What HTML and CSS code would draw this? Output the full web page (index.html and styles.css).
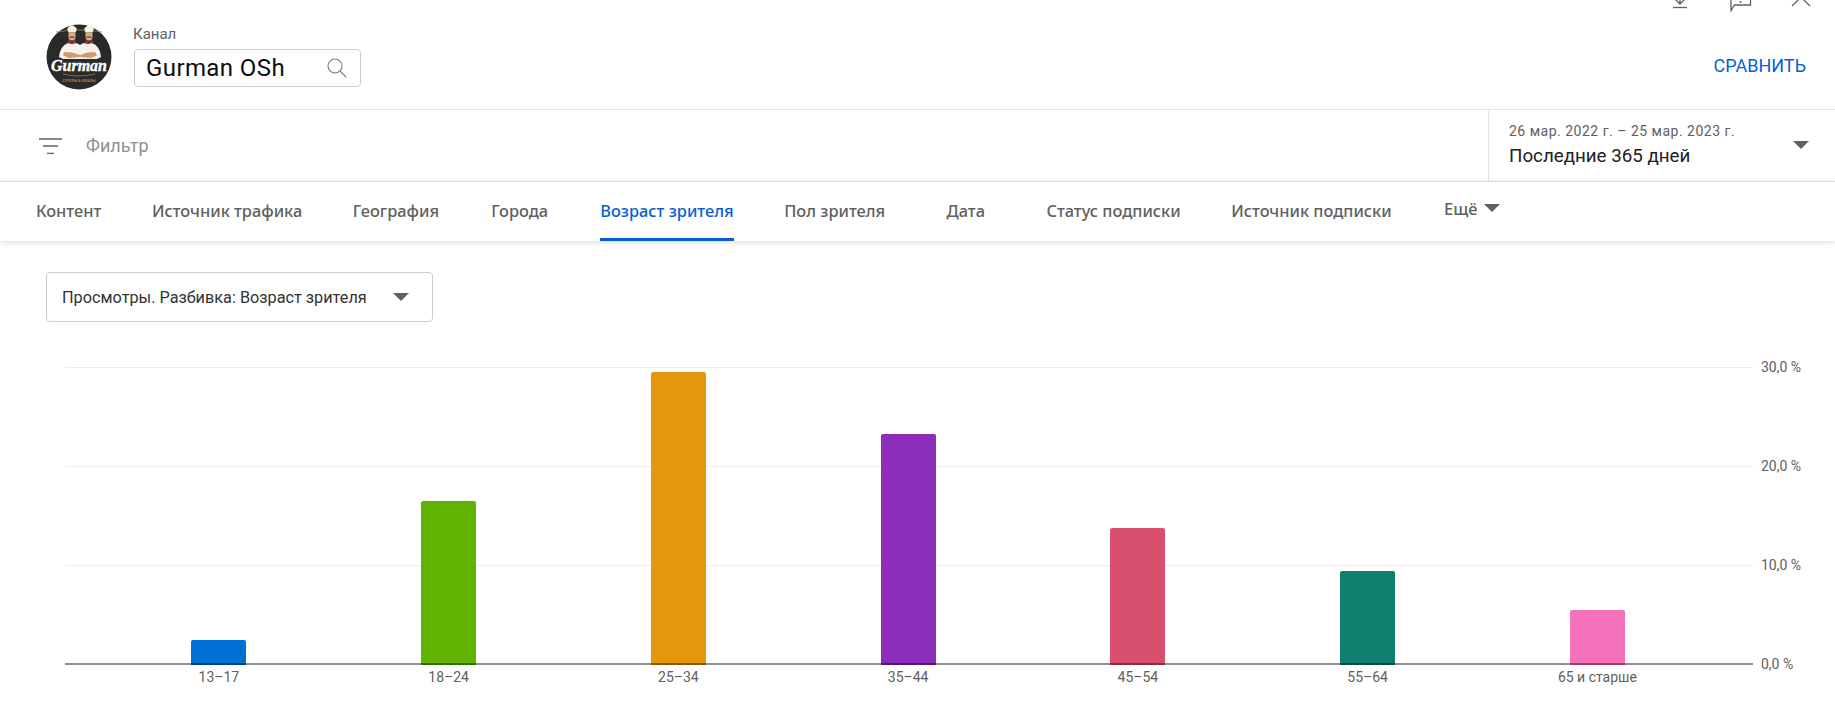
FILE: index.html
```html
<!DOCTYPE html>
<html lang="ru">
<head>
<meta charset="utf-8">
<title>Gurman OSh</title>
<link rel="stylesheet" href="styles.css">
</head>
<body>
<div class="page">
  <svg class="window-icons" width="140" height="14" viewBox="0 0 140 14" fill="none" stroke="#606060" stroke-width="1.3">
    <path d="M9 -8V4M4 -1l5 5 5-5"/><path d="M2 7.500h14"/>
    <path d="M60 -6H79.500V5H63.500L60 10.600z"/><circle cx="69.500" cy="2" r="1" fill="#606060" stroke="none"/>
    <path d="M121 6l9-9 9 9"/>
  </svg>
  <header class="header">
    <svg class="logo" width="66" height="66" viewBox="0 0 66 66">
      <circle cx="33" cy="33" r="32.500" fill="#2b2a2a"/>
      <path d="M10 8q23 -4 46 0" stroke="#a87a4a" stroke-width=".8" fill="none"/>
      <path d="M13 33q1-11 9-14l4 1 4-1q3 1 4 2 1-1 4-2l4 1 4-1q8 3 9 14l-4 2H17z" fill="#f6f3ee"/>
      <path d="M21.500 6a2.300 2.300 0 0 1 1.500-3 3.500 3.500 0 0 1 6 0 2.300 2.300 0 0 1 1.500 3l-1 2.500h-7z" fill="#f4f2ee"/>
      <path d="M38.500 6a2.300 2.300 0 0 1 1.500-3 3.500 3.500 0 0 1 6 0 2.300 2.300 0 0 1 1.500 3l-1 2.500h-7z" fill="#f4f2ee"/>
      <path d="M22.500 8.500h7v4.500a3.500 3.500 0 0 1-7 0z" fill="#dcaa84"/>
      <path d="M39.500 8.500h7v4.500a3.500 3.500 0 0 1-7 0z" fill="#dcaa84"/>
      <path d="M23.500 12.500h5v1.200h-5zM40.500 12.500h5v1.200h-5z" fill="#5e4230"/>
      <path d="M22.500 16l3.500 1.800 3.500-1.800v3.600l-3.500-1.300-3.500 1.300zM39.500 16l3.500 1.800 3.500-1.800v3.600l-3.500-1.300-3.500 1.300z" fill="#c92a22"/>
      <path d="M18 28l8 .5 8 2.500 7-2.500 8-.5 2 3.500-6 2.500-11-1-11 1-6-2.500z" fill="#d29a6e"/>
      <text class="logo-word" x="33" y="46.500" text-anchor="middle" textLength="56" lengthAdjust="spacingAndGlyphs">Gurman</text>
      <path d="M17 50q16 4 32 0" stroke="#b5824e" stroke-width=".7" fill="none"/>
      <text class="logo-sub" x="33" y="57.500" text-anchor="middle">СУПЕРЫ &amp; КЕБАБЫ</text>
    </svg>
    <div class="channel">
      <div class="channel-label">Канал</div>
      <div class="channel-box">
        <span class="channel-name">Gurman OSh</span>
        <svg width="20" height="20" viewBox="0 0 20 20" fill="none" stroke="#7a7a7a" stroke-width="1.100"><circle cx="8" cy="8" r="7"/><path d="M13 13l6.300 6.300"/></svg>
      </div>
    </div>
    <a class="compare">Сравнить</a>
  </header>
  <section class="filter-row">
    <div class="filter">
      <svg width="23" height="16" viewBox="0 0 23 16" fill="none" stroke="#606060" stroke-width="1.300"><path d="M0 1h23M4 8h15M8 15.300h7"/></svg>
      <span class="filter-text">Фильтр</span>
    </div>
    <div class="date-picker">
      <div class="date-text">
        <div class="date-range">26 мар. 2022 г. – 25 мар. 2023 г.</div>
        <div class="date-name">Последние 365 дней</div>
      </div>
      <span class="caret caret-date"></span>
    </div>
  </section>
  <nav class="tabs">
    <a class="tab">Контент</a>
    <a class="tab">Источник трафика</a>
    <a class="tab">География</a>
    <a class="tab">Города</a>
    <a class="tab tab-active">Возраст зрителя</a>
    <a class="tab">Пол зрителя</a>
    <a class="tab">Дата</a>
    <a class="tab">Статус подписки</a>
    <a class="tab">Источник подписки</a>
    <a class="tab tab-more">Ещё<span class="caret caret-more"></span></a>
  </nav>
  <main class="content">
    <div class="metric">
      <span>Просмотры. Разбивка: Возраст зрителя</span>
      <span class="caret"></span>
    </div>
    <div class="chart">
      <div class="ticks">
        <div class="tick"><i class="tick-line"></i><span>30,0 %</span></div>
        <div class="tick"><i class="tick-line"></i><span>20,0 %</span></div>
        <div class="tick"><i class="tick-line"></i><span>10,0 %</span></div>
        <div class="tick tick-axis"><i class="tick-line"></i><span>0,0 %</span></div>
      </div>
      <div class="bars">
        <div class="slot"><div class="bar" style="height:25px;background:#0070d4"></div></div>
        <div class="slot"><div class="bar" style="height:164px;background:#60b300"></div></div>
        <div class="slot"><div class="bar" style="height:293px;background:#e5970b"></div></div>
        <div class="slot"><div class="bar" style="height:231px;background:#8c2dbb"></div></div>
        <div class="slot"><div class="bar" style="height:137px;background:#d94f6e"></div></div>
        <div class="slot"><div class="bar" style="height:94px;background:#107f70"></div></div>
        <div class="slot"><div class="bar" style="height:55px;background:#f472b9"></div></div>
      </div>
      <div class="labels">
        <span>13–17</span><span>18–24</span><span>25–34</span><span>35–44</span><span>45–54</span><span>55–64</span><span>65 и старше</span>
      </div>
    </div>
  </main>
</div>
</body>
</html>
```

FILE: styles.css
```css
* { box-sizing: border-box; }
html, body { margin: 0; height: 100%; background: #fff; }
body { font-family: Roboto, "Liberation Sans", sans-serif; color: #0d0d0d; overflow: hidden; }
.page { position: relative; width: 1835px; height: 718px; overflow: hidden; }

.window-icons { position: absolute; top: 0; left: 1671px; }

.header { height: 110px; display: flex; align-items: flex-start; padding: 24px 29px 0 46px; border-bottom: 1px solid #e3e3e3; }
.logo { flex: none; margin-right: 22px; }
.logo-word { font: italic 700 17px "Liberation Serif", serif; fill: #fff; stroke: #fff; stroke-width: .35px; }
.logo-sub { font: 600 3.600px Roboto, sans-serif; fill: #b5824e; }
.channel { width: 227px; }
.channel-label { font-size: 15px; line-height: 20px; color: #606060; margin-left: -1px; }
.channel-box { height: 38px; margin-top: 5px; display: flex; align-items: center; justify-content: space-between; padding: 0 13px 0 11px; border: 1px solid #ccc; border-radius: 4px; }
.channel-name { font-size: 24px; font-weight: 400; letter-spacing: .4px; }
.compare { margin-left: auto; margin-top: 32px; font-size: 18px; line-height: 20px; font-weight: 400; text-transform: uppercase; color: #065fd4; }

.filter-row { height: 72px; display: flex; border-bottom: 1px solid #e3e3e3; }
.filter { flex: 1; display: flex; align-items: center; padding-left: 39px; gap: 24px; }
.filter-text { font-size: 18px; color: #909090; }
.date-picker { width: 347px; height: 71px; display: flex; align-items: center; justify-content: space-between; padding: 0 26px 3px 20px; border-left: 1px solid #e3e3e3; }
.date-range { font-size: 14px; line-height: 20px; color: #606060; letter-spacing: .5px; }
.date-name { font-size: 18.750px; line-height: 24px; margin-top: 3px; color: #212121; }
.caret-date { margin-top: 2px; }

.caret { display: block; flex: none; width: 0; height: 0; border-left: 8px solid transparent; border-right: 8px solid transparent; border-top: 8px solid #606060; }

.tabs { height: 59px; display: flex; padding-left: 11px; background: #fff; box-shadow: 0 1px 6px rgba(0,0,0,.16); position: relative; }
.tab { min-width: 60px; margin: 0 25.300px; height: 59px; display: flex; align-items: center; justify-content: center; font-family: "Noto Sans", sans-serif; font-size: 16.400px; font-weight: 500; color: #606060; border-bottom: 3px solid transparent; }
.tab:first-child { margin-left: 25px; }
.tab-active { color: #065fd4; border-bottom-color: #065fd4; }
.tab-more { gap: 7px; padding-bottom: 4px; }

.content { padding: 31px 0 0 46px; }
.metric { width: 387px; height: 50px; display: flex; align-items: center; justify-content: space-between; padding: 0 23px 0 15px; border: 1px solid #ccc; border-radius: 4px; font-size: 16.250px; color: #333; }

.chart { margin: 44px 0 0 19px; display: grid; grid-template-columns: 1688px; grid-template-rows: 299px auto; }
.ticks { grid-area: 1 / 1; width: 1770px; display: flex; flex-direction: column; justify-content: space-between; }
.tick { height: 2px; display: flex; align-items: center; gap: 8px; font-size: 14px; color: #606060; }
.tick-line { flex: none; width: 1688px; height: 1px; background: #ececec; }
.tick-axis .tick-line { height: 2px; background: #909090; }
.bars { grid-area: 1 / 1; display: grid; grid-template-columns: repeat(7, 229.750px); padding: 0 39px; align-items: end; }
.slot { display: flex; justify-content: center; align-items: flex-end; height: 299px; }
.bar { width: 55px; border-radius: 2px 2px 0 0; border-bottom: 2px solid rgba(0,0,0,.4); }
.labels { display: grid; grid-template-columns: repeat(7, 229.750px); padding: 0 39px; margin-top: 2px; text-align: center; font-size: 14px; line-height: 20px; color: #606060; }
```
